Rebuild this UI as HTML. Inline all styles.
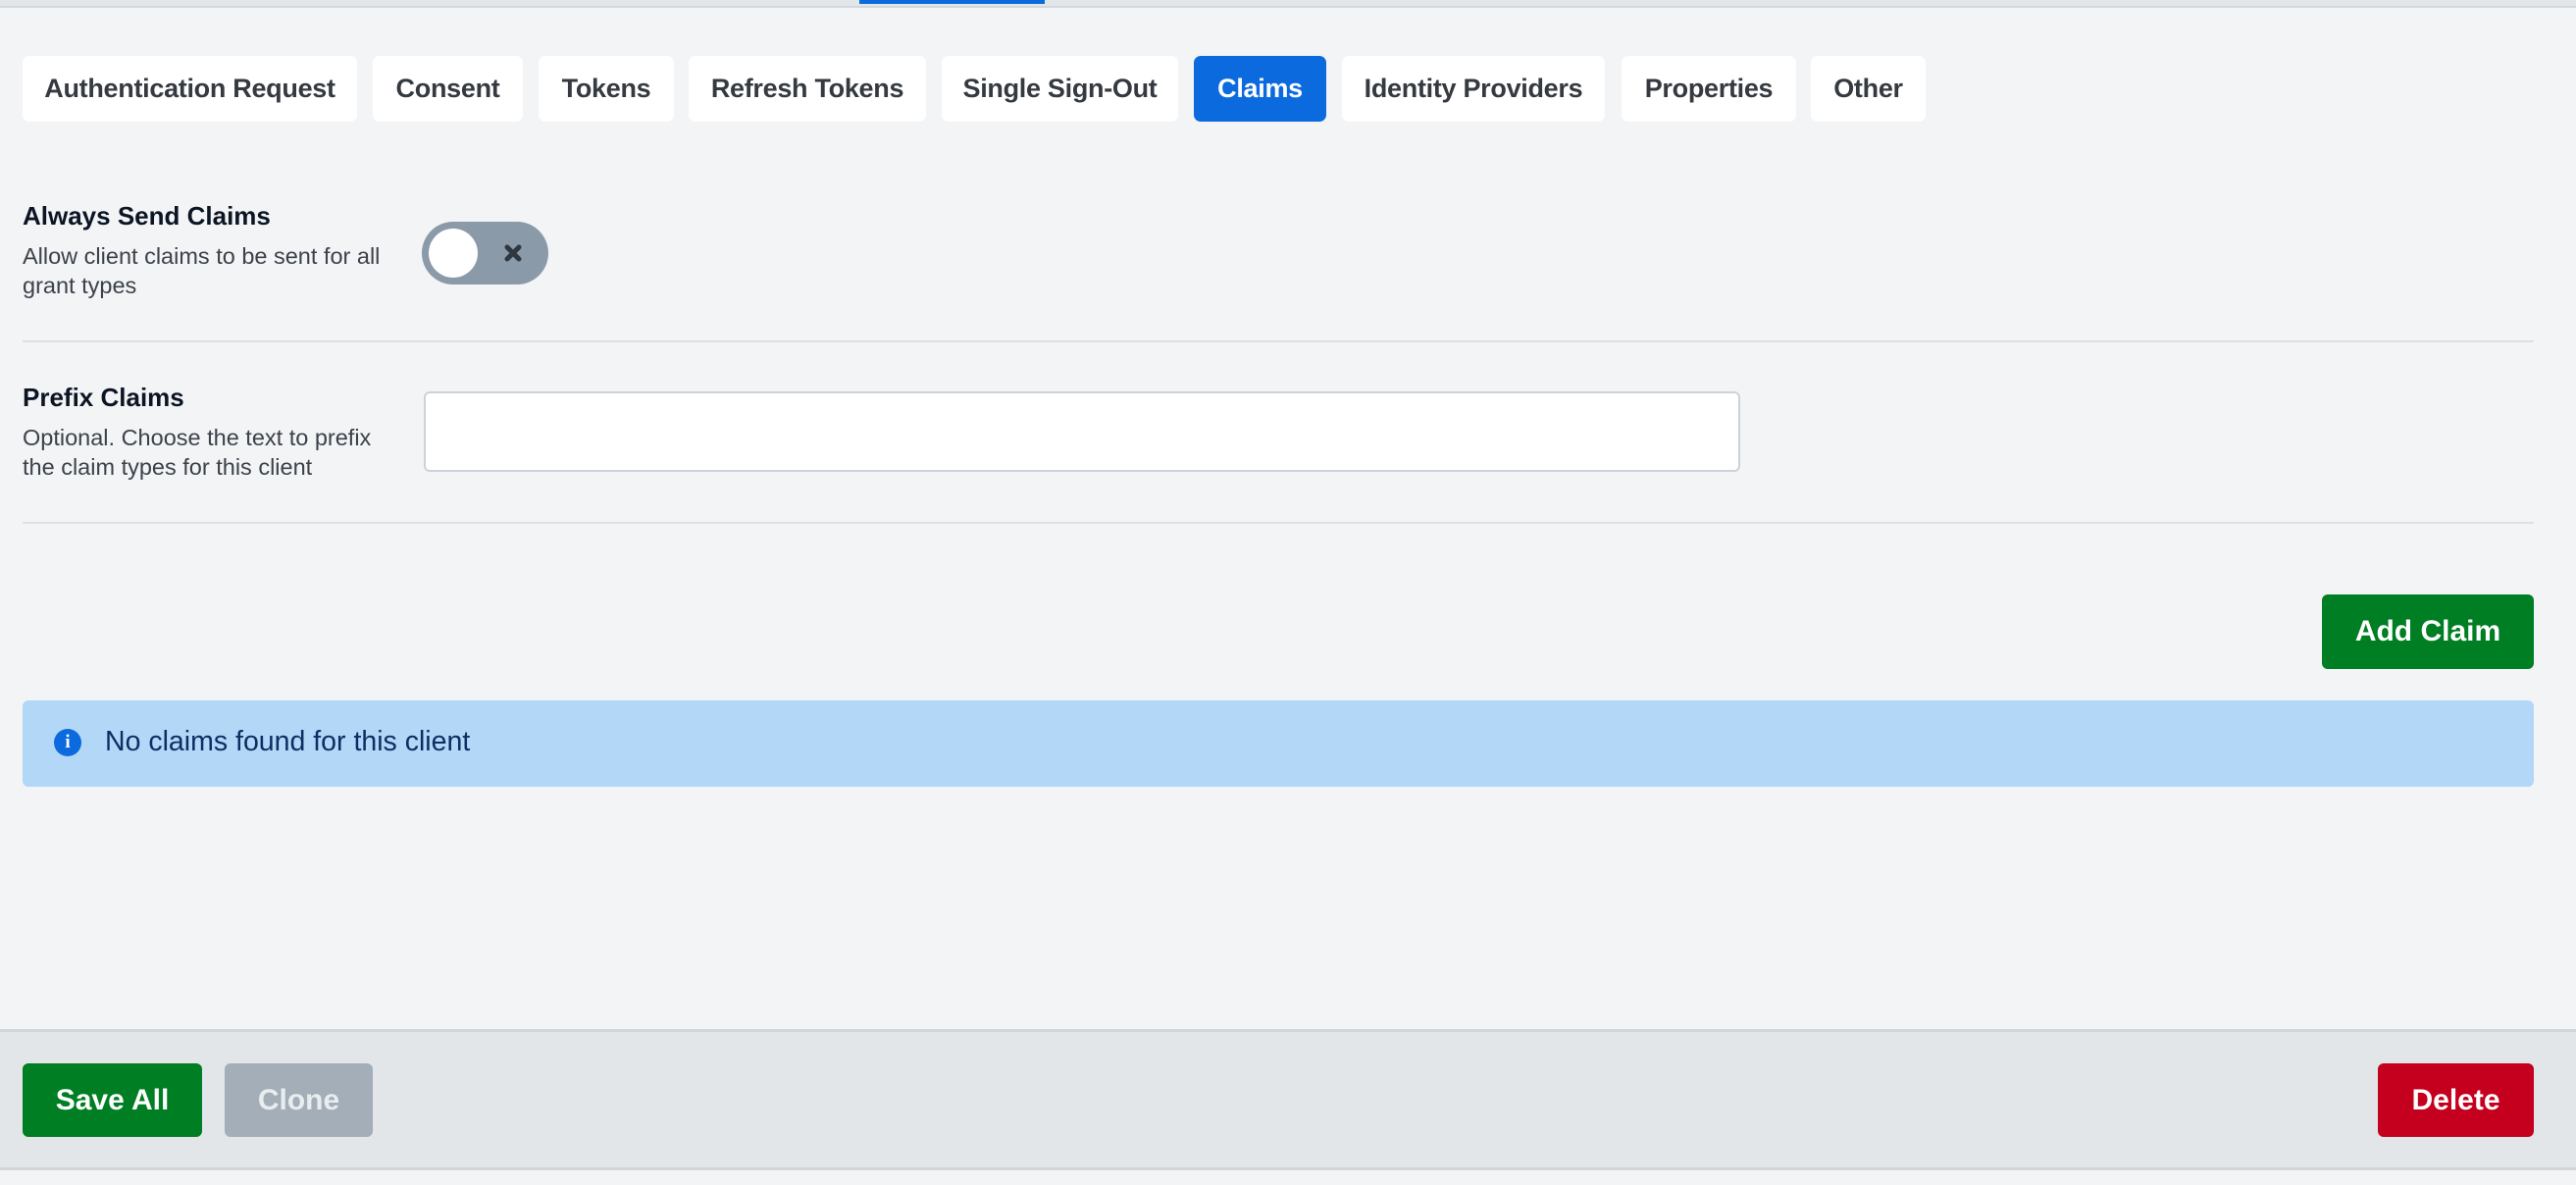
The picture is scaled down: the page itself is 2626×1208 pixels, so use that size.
<!DOCTYPE html>
<html><head><meta charset="utf-8"><style>
*{box-sizing:border-box;margin:0;padding:0}
body{width:2626px;height:1208px;background:#f3f4f6;font-family:"Liberation Sans",Arial,sans-serif;position:relative;overflow:hidden;color:#1b2430}
.a{position:absolute}
.tab{position:absolute;top:57px;height:67px;background:#fff;border-radius:7px;font-weight:bold;font-size:27px;color:#343a40;display:flex;align-items:center;justify-content:center;letter-spacing:-0.3px}
.lbl{font-weight:bold;font-size:26px;color:#0c1524}
.desc{font-size:23.5px;color:#3b424a;line-height:30px}
.btn{position:absolute;border-radius:6px;color:#fff;font-weight:bold;font-size:30px;display:flex;align-items:center;justify-content:center}
</style></head><body>
<div class="a" style="left:0;top:0;width:2626px;height:8px;background:#e3e6e9;border-bottom:2px solid #d3d8dd"></div>
<div class="a" style="left:876px;top:0;width:189px;height:4px;background:#0b6bde"></div>

<div class="tab" style="left:23px;width:341px">Authentication Request</div>
<div class="tab" style="left:380px;width:153px">Consent</div>
<div class="tab" style="left:549px;width:138px">Tokens</div>
<div class="tab" style="left:702px;width:242px">Refresh Tokens</div>
<div class="tab" style="left:960px;width:241px">Single Sign-Out</div>
<div class="tab" style="left:1217px;width:135px;background:#0b6bde;color:#fff">Claims</div>
<div class="tab" style="left:1368px;width:268px">Identity Providers</div>
<div class="tab" style="left:1653px;width:178px">Properties</div>
<div class="tab" style="left:1846px;width:117px">Other</div>

<div class="a lbl" style="left:23px;top:205px">Always Send Claims</div>
<div class="a desc" style="left:23px;top:246px;width:375px">Allow client claims to be sent for all grant types</div>
<div class="a" style="left:430px;top:226px;width:129px;height:64px;border-radius:32px;background:#8a9aa8">
 <div class="a" style="left:7px;top:7px;width:50px;height:50px;border-radius:50%;background:#fff"></div>
 <svg class="a" style="left:84px;top:23px" width="18" height="18" viewBox="0 0 18 18"><path d="M3 3L15 15M15 3L3 15" stroke="#2f3740" stroke-width="5" stroke-linecap="round"/></svg>
</div>
<div class="a" style="left:23px;top:347px;width:2560px;height:2px;background:#dde1e5"></div>

<div class="a lbl" style="left:23px;top:390px">Prefix Claims</div>
<div class="a desc" style="left:23px;top:431px;width:375px">Optional. Choose the text to prefix the claim types for this client</div>
<div class="a" style="left:432px;top:399px;width:1342px;height:82px;background:#fff;border:2px solid #ccd2d8;border-radius:6px"></div>
<div class="a" style="left:23px;top:532px;width:2560px;height:2px;background:#dde1e5"></div>

<div class="btn" style="left:2367px;top:606px;width:216px;height:76px;background:#007e23">Add Claim</div>

<div class="a" style="left:23px;top:714px;width:2560px;height:88px;background:#b3d7f7;border-radius:6px">
 <div class="a" style="left:32px;top:29px;width:28px;height:28px;border-radius:50%;background:#0b6bde;color:#fff;font-family:'Liberation Serif',serif;font-weight:bold;font-size:19px;text-align:center;line-height:28px">i</div>
 <div class="a" style="left:84px;top:26px;font-size:28.5px;color:#0b2f63">No claims found for this client</div>
</div>

<div class="a" style="left:0;top:1049px;width:2626px;height:144px;background:#e2e6e9;border-top:3px solid #d1d6db;border-bottom:3px solid #d1d6db"></div>
<div class="btn" style="left:23px;top:1084px;width:183px;height:75px;background:#007e23">Save All</div>
<div class="btn" style="left:229px;top:1084px;width:151px;height:75px;background:#a3aeb8;color:#e9edf0">Clone</div>
<div class="btn" style="left:2424px;top:1084px;width:159px;height:75px;background:#c4001e">Delete</div>
</body></html>
